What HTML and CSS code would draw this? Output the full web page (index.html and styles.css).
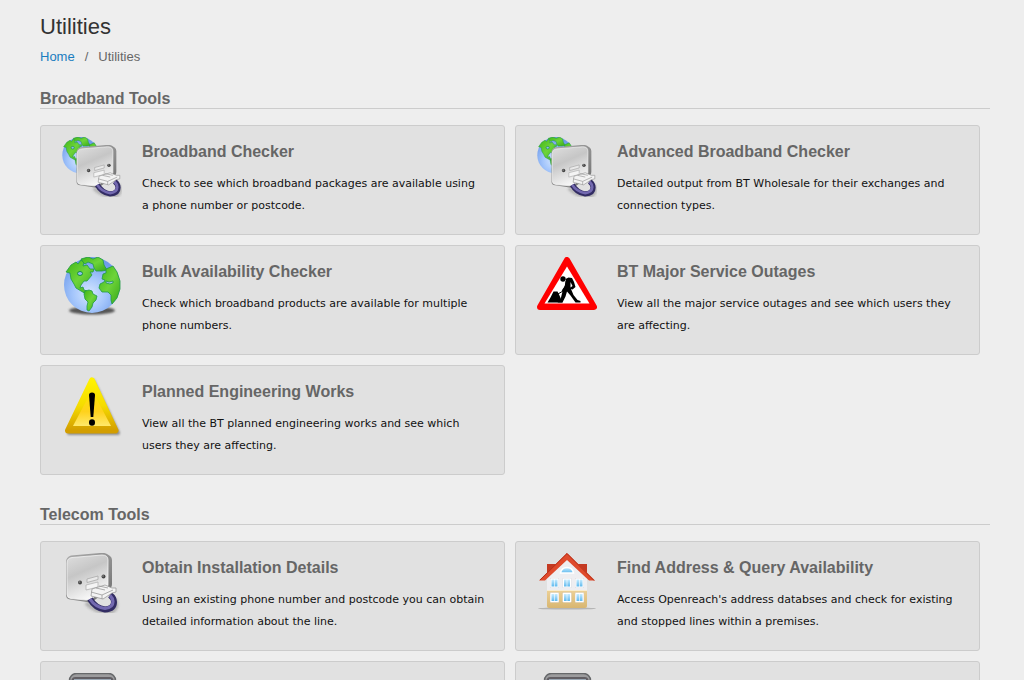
FILE: index.html
```
<!DOCTYPE html>
<html lang="en">
<head>
<meta charset="utf-8">
<meta name="viewport" content="width=device-width, initial-scale=1">
<title>Utilities</title>
<link rel="stylesheet" href="styles.css">
</head>
<body>
<svg class="defs" width="0" height="0" aria-hidden="true">
  <defs>
    <radialGradient id="sea" cx=".45" cy=".65" r=".6"><stop offset="0" stop-color="#d5e6ff"/><stop offset=".5" stop-color="#a3c5fb"/><stop offset="1" stop-color="#6f9bea"/></radialGradient>
    <linearGradient id="land" x1="0" y1="0" x2="1" y2="1"><stop offset="0" stop-color="#3fb516"/><stop offset=".5" stop-color="#6ed43a"/><stop offset="1" stop-color="#38a818"/></linearGradient>
    <linearGradient id="plate" x1="0" y1="0" x2=".4" y2="1"><stop offset="0" stop-color="#dedede"/><stop offset=".45" stop-color="#c6c6c6"/><stop offset="1" stop-color="#f6f6f6"/></linearGradient>
    <linearGradient id="edge" x1="0" y1="0" x2="1" y2="1"><stop offset="0" stop-color="#aaa"/><stop offset=".6" stop-color="#8c8c8c"/><stop offset="1" stop-color="#6a6a6a"/></linearGradient>
    <linearGradient id="gold" x1="0" y1="0" x2="0" y2="1"><stop offset="0" stop-color="#fff200"/><stop offset=".5" stop-color="#f5dc00"/><stop offset="1" stop-color="#d39e00"/></linearGradient>
    <linearGradient id="amber" x1="0" y1="0" x2="0" y2="1"><stop offset="0" stop-color="#ffe600"/><stop offset=".6" stop-color="#ffd21c"/><stop offset="1" stop-color="#ffe96a"/></linearGradient>
    <linearGradient id="sand" x1="0" y1="0" x2="0" y2="1"><stop offset="0" stop-color="#ecd096"/><stop offset="1" stop-color="#d8b671"/></linearGradient>
    <linearGradient id="pane" x1="0" y1="0" x2="0" y2="1"><stop offset="0" stop-color="#c8ecff"/><stop offset="1" stop-color="#5fb9ee"/></linearGradient>
    <filter id="soft" x="-20%" y="-60%" width="140%" height="220%"><feGaussianBlur stdDeviation="1.2"/></filter>
    <symbol id="globe" viewBox="0 0 60 60">
      <circle cx="30" cy="28" r="28" fill="url(#sea)"/>
      <g fill="url(#land)" stroke="#1f9a45" stroke-width=".8" stroke-linejoin="round">
        <path d="M4 15 9 8l5-3 2 2 3-4 3 2-1 4 4-1 3 4 4 0-1 3-3 0 2 3-5 6-3 0-3 4-1 3 3-1 1 3 3 1-1 3-5-3-5-3-2-4-3-5-1-6z"/>
        <path d="M19 2 26 0l5 2 5-2 5 3 1 5 3 5-5 1-6 0-2-3-1-4-5-2-3 2-2-2z"/>
        <path d="m23 34 4-1 3 1 1 3 4 2-1 4-3 3-1 4-3 4-2-1 0-4 1-4-3-3-1-5z"/>
        <path d="m51 9 4 6 3 9 0 8-3 9-5 6-1-4 0-5-3-3-6 0-3-4 1-4 4-2 1-2-3-1 1-5 3-1 0-4z"/>
        <path d="m44 24 3 1 4-1 0 2-3 1-4-1z" fill="#9cc6ee"/>
      </g>
      <ellipse cx="18" cy="16.500" rx="2.500" ry="2" fill="#8ebbf5" stroke="#178a45"/>
    </symbol>
    <symbol id="socket" viewBox="0 0 60 60">
      <path d="M24 50q10 10 25 9 8-3 4-13" fill="none" stroke="#444" stroke-opacity=".3" stroke-width="4" filter="url(#soft)"/>
      <path d="M4 9q0-5 5-6.500L38 0q5-.5 7 1l3 2q2 1.500 2 4v24q0 4-4 6L30 49q-2 1-5 0L8 46.500Q4 46 4 42z" fill="url(#edge)"/>
      <path d="M5 10q0-5 5-5.500L40 2q6 0 6 5v25q0 3-4 5L29 46q-2 1-5 1L9 45.500Q5 45 5 41.500z" fill="url(#plate)" stroke="#f4f4f4" stroke-width=".8"/>
      <circle cx="18" cy="29.500" r="2" fill="#444"/><circle cx="17.500" cy="29" r="1" fill="#777"/>
      <circle cx="41.500" cy="23.500" r="2" fill="#444"/><circle cx="41" cy="23" r="1" fill="#777"/>
      <path d="m25 26 11-3v3.500l-11 3z" fill="#e9e9e9" stroke="#a0a0a0" stroke-width=".7"/><path d="m24 32 12-3v5l-12 3z" fill="#f4f4f4" stroke="#aaa" stroke-width=".7"/>
      <path d="M28 46q5 9 15 10.500 9-.5 9-7.500 0-4-4-7" fill="none" stroke="#322c63" stroke-width="6"/>
      <path d="M28 46q5 8 15 9.500 8-1 8-7 0-3-3-6" fill="none" stroke="#7369b0" stroke-width="3.200"/>
      <path d="m30 36 13-4 7 3 4 0 0 4-4 1-9 6-12-3z" fill="#f3f3f3" stroke="#909090" stroke-width=".7"/>
      <path d="m29 39 11 3 11-5M40 42v4M34 35l9 2m-6-4 9 2" fill="none" stroke="#999" stroke-width=".8"/>
    </symbol>
    <symbol id="window" viewBox="0 0 9 10">
      <rect width="9" height="10" rx="1" fill="#fff" stroke="#d2d2da" stroke-width=".7"/>
      <path d="M1.500 1.500h2.700v7H1.500zM4.800 1.500h2.700v7H4.800z" fill="url(#pane)"/>
    </symbol>
    <symbol id="handset" viewBox="0 0 60 60">
      <rect x="7.500" y=".5" width="46" height="58" rx="7" fill="#9c9c9e" stroke="#66686a" stroke-width="1.500"/>
      <rect x="9.500" y="4" width="42" height="52" rx="4" fill="#625f64"/>
      <rect x="12" y="6" width="37" height="40" fill="#9ba9b6"/>
    </symbol>
  </defs>
</svg>

<main class="page">
  <h1 class="page-title">Utilities</h1>
  <nav class="breadcrumb" aria-label="Breadcrumb">
    <a href="#">Home</a><span>/</span><span>Utilities</span>
  </nav>

  <section class="tools">
    <h2 class="tools-title">Broadband Tools</h2>
    <div class="tools-grid">
      <article class="card">
        <svg class="card-icon" viewBox="0 0 60 60" aria-hidden="true"><use href="#globe" width="39" height="39" x="-1"/><use href="#socket" x="11" y="8" width="52" height="52"/></svg>
        <div class="card-body"><h3>Broadband Checker</h3><p>Check to see which broadband packages are available using a&nbsp;phone number or postcode.</p></div>
      </article>
      <article class="card">
        <svg class="card-icon" viewBox="0 0 60 60" aria-hidden="true"><use href="#globe" width="39" height="39" x="-1"/><use href="#socket" x="11" y="8" width="52" height="52"/></svg>
        <div class="card-body"><h3>Advanced Broadband Checker</h3><p>Detailed output from BT Wholesale for their exchanges and connection types.</p></div>
      </article>
      <article class="card">
        <svg class="card-icon" viewBox="0 0 60 60" aria-hidden="true"><ellipse cx="30" cy="53.500" rx="23" ry="4" fill="#555" filter="url(#soft)"/><use href="#globe" width="60" height="60"/></svg>
        <div class="card-body"><h3>Bulk Availability Checker</h3><p>Check which broadband products are available for multiple phone numbers.</p></div>
      </article>
      <article class="card">
        <svg class="card-icon" viewBox="0 0 60 60" aria-hidden="true">
          <path d="M30 3 57 50H3z" fill="#f00" stroke="#f00" stroke-width="6" stroke-linejoin="round"/>
          <path d="M30 9.500 52.500 46.500H7.500z" fill="#fff"/>
          <path d="m10.500 45.500 3-5 3-6h4l2 4 3 7z"/>
          <circle cx="26" cy="22" r="2.700"/>
          <path d="m28.500 22 3-1.500 3.500.5 2 4 1.500 5-3 2.500-1.500-.5 2.500 6 4 5 3 1v1.500h-5l-5-7-3.500-4-1.500 5-3 6h-5l3-3 2-8 2-5 1.500-6z"/>
          <path d="m29.500 24-.5 5-3.500 5" fill="none" stroke="#000" stroke-width="2"/>
          <path d="m20 37.500 7-4 7-2.500" fill="none" stroke="#000" stroke-width="1"/>
          <path d="m33.500 25 2 4-2 1.500z" fill="#fff"/>
        </svg>
        <div class="card-body"><h3>BT Major Service Outages</h3><p>View all the major service outages and see which users they are affecting.</p></div>
      </article>
      <article class="card">
        <svg class="card-icon" viewBox="0 0 60 60" aria-hidden="true">
          <path d="M31 4 56 56H7z" fill="#555" stroke="#555" stroke-width="4" stroke-linejoin="round" opacity=".6" filter="url(#soft)"/>
          <path d="M30 3.500 53.500 53.500H6z" fill="url(#gold)" stroke="url(#gold)" stroke-width="6" stroke-linejoin="round"/>
          <path d="M30 13 49 49H11z" fill="url(#amber)"/>
          <path d="M27 18q0-2.500 3-2.500t3 2.500L31.300 40h-2.600z"/><ellipse cx="30" cy="45.500" rx="3" ry="3.300"/>
        </svg>
        <div class="card-body"><h3>Planned Engineering Works</h3><p>View all the BT planned engineering works and see which users they are affecting.</p></div>
      </article>
    </div>
  </section>

  <section class="tools">
    <h2 class="tools-title">Telecom Tools</h2>
    <div class="tools-grid">
      <article class="card">
        <svg class="card-icon" viewBox="0 0 60 60" aria-hidden="true"><use href="#socket" width="60" height="60"/></svg>
        <div class="card-body"><h3>Obtain Installation Details</h3><p>Using an existing phone number and postcode you can obtain detailed information about the line.</p></div>
      </article>
      <article class="card">
        <svg class="card-icon" viewBox="0 0 60 60" aria-hidden="true">
          <ellipse cx="30" cy="55.500" rx="29" ry="1" fill="#b5b5b5"/>
          <path d="M10 11h40v14H10z" fill="#c43a22"/>
          <path d="M30 6 50 24v14H10V24z" fill="#eeeef1"/>
          <path d="M10 37.500h40V53q0 2-2 2H12q-2 0-2-2z" fill="url(#sand)"/>
          <path d="M10 37.500h40" stroke="#f9edcf"/>
          <path d="m30 0 28 27.500h-6L30 7 8 27.500H2z" fill="#df4a2c"/><path d="m30 .5 27 27" stroke="#b32e19"/><path d="M3 27 30 .5" stroke="#b32e19"/>
          <path d="M23.500 20q1-5.500 6.500-5.500t6.500 5.500z" fill="url(#pane)" stroke="#fff" stroke-width="1.500"/>
          <use href="#window" x="13" y="25" width="9" height="10"/><use href="#window" x="25.500" y="25" width="9" height="10"/><use href="#window" x="38" y="25" width="9" height="10"/>
          <use href="#window" x="13" y="39.500" width="9" height="10"/><use href="#window" x="25.500" y="39.500" width="9" height="10"/><use href="#window" x="38" y="39.500" width="9" height="10"/>
        </svg>
        <div class="card-body"><h3>Find Address &amp; Query Availability</h3><p>Access Openreach's address databses and check for existing and stopped lines within a premises.</p></div>
      </article>
      <article class="card"><svg class="card-icon" viewBox="0 0 60 60" aria-hidden="true"><use href="#handset" width="60" height="60"/></svg></article>
      <article class="card"><svg class="card-icon" viewBox="0 0 60 60" aria-hidden="true"><use href="#handset" width="60" height="60"/></svg></article>
    </div>
  </section>
</main>
</body>
</html>
```
FILE: styles.css
```
* { box-sizing: border-box; }

body {
  margin: 0;
  background: #eee;
  color: #666;
  font-family: "Liberation Sans", Arial, sans-serif;
}

.defs { position: absolute; }

.page { padding: 13px 34px 0 40px; }

.page-title {
  margin: 0;
  color: #333;
  font-size: 22px;
  font-weight: 400;
  line-height: 28px;
}

.breadcrumb {
  display: flex;
  gap: 10px;
  margin: 6px 0 23px;
  font-size: 13px;
  line-height: 20px;
}

.breadcrumb a {
  color: #1a7dc0;
  text-decoration: none;
}

.tools { margin-bottom: 31px; }

.tools-title {
  margin: 0 0 16px;
  border-bottom: 1px solid #ccc;
  font-size: 16px;
  line-height: 18px;
}

.tools-grid {
  display: grid;
  grid-template-columns: repeat(2, minmax(0, 1fr));
  gap: 10px;
  margin-right: 10px;
}

.card {
  display: flex;
  gap: 20px;
  min-height: 110px;
  padding: 11px 15px 11px 21px;
  background: #e1e1e1;
  border: 1px solid #ccc;
  border-radius: 3px;
}

.card-icon {
  flex: none;
  width: 60px;
  height: 60px;
}

.card-body { padding-top: 5px; }

.card h3 {
  margin: 0 0 11px;
  font-size: 16px;
  line-height: 20px;
}

.card p {
  margin: 0;
  color: #111;
  font-family: Verdana, "DejaVu Sans", sans-serif;
  font-size: 11px;
  line-height: 22px;
}
```
